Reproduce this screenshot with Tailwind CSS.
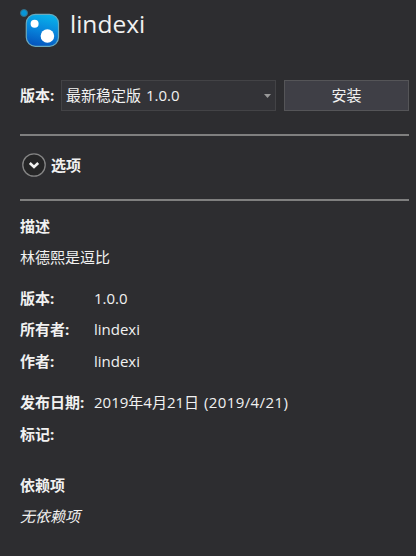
<!DOCTYPE html>
<html lang="zh-CN">
<head>
<meta charset="utf-8">
<title>lindexi</title>
<script src="https://cdn.jsdelivr.net/npm/@tailwindcss/browser@4"></script>
</head>
<body class="flex h-[556px] w-[416px] flex-col overflow-hidden bg-[#2d2d30] pl-5 pr-[7px] font-['Open_Sans','Noto_Sans_CJK_SC',sans-serif] text-[15px] leading-[31px] whitespace-nowrap text-[#f1f1f1]">
  <header class="flex h-[50px] shrink-0 items-center">
    <svg class="h-[50px] w-[50px] shrink-0" viewBox="20 0 50 50">
      <defs>
        <linearGradient id="tile" x1="0.6" y1="0" x2="0.35" y2="1">
          <stop offset="0" stop-color="#08b2ea"/>
          <stop offset="0.5" stop-color="#0785dc"/>
          <stop offset="1" stop-color="#0454bd"/>
        </linearGradient>
      </defs>
      <circle cx="24" cy="13" r="3.5" fill="#0795d6" stroke="#396d82"/>
      <rect x="26.3" y="14.3" width="32.2" height="32" rx="9" fill="url(#tile)" stroke="#69a9bd" stroke-width="1.2"/>
      <circle cx="34.6" cy="23.8" r="4" fill="#fff"/>
      <circle cx="47.4" cy="36" r="6.8" fill="#fff"/>
    </svg>
    <h1 class="pb-[2px] text-[24.5px] leading-[48px]">lindexi</h1>
  </header>

  <div class="mt-[30px] flex h-[31px] shrink-0 items-center">
    <span class="w-[41px] font-bold">版本:</span>
    <div class="flex h-[31px] w-[215px] items-center justify-between border border-[#434346] bg-[#333337] pl-1 pr-1">
      <span>最新稳定版 <span class="ml-px">1.0.0</span></span>
      <svg class="h-1 w-[7px]" viewBox="0 0 7 4"><path d="M0 0h7L3.5 4z" fill="#999"/></svg>
    </div>
    <button class="ml-2 h-[31px] w-[125px] border border-[#555558] bg-[#3f3f46] leading-[29px]">安装</button>
  </div>

  <hr class="mt-[23px] h-[2px] shrink-0 border-0 bg-[#7f7f7f]">

  <div class="mt-[13px] flex h-[32px] shrink-0 items-center">
    <svg class="ml-[2px] h-6 w-6" viewBox="0 0 24 24" fill="none">
      <circle cx="12" cy="12" r="11.2" fill="#252526" stroke="#858585" stroke-width="1.3"/>
      <path d="M7.8 10l4.2 4 4.2-4" stroke="#f1f1f1" stroke-width="2.6"/>
    </svg>
    <span class="ml-[5px] font-bold">选项</span>
  </div>

  <hr class="mt-[18px] h-[2px] shrink-0 border-0 bg-[#7f7f7f]">

  <section class="mt-[10px]">
    <h2 class="font-bold">描述</h2>
    <p>林德熙是逗比</p>
  </section>

  <dl class="mt-[10px] grid grid-cols-[74px_1fr] auto-rows-[31.4px]">
    <dt class="font-bold">版本:</dt><dd>1.0.0</dd>
    <dt class="font-bold">所有者:</dt><dd>lindexi</dd>
    <dt class="font-bold">作者:</dt><dd>lindexi</dd>
  </dl>
  <dl class="mt-[10px] grid grid-cols-[74px_1fr] auto-rows-[31.4px]">
    <dt class="font-bold">发布日期:</dt>
    <dd>2019年4月21日 <span class="ml-px tracking-[0.4px]">(2019/4/21)</span></dd>
    <dt class="font-bold">标记:</dt><dd></dd>
  </dl>

  <section class="mt-[20px]">
    <h2 class="font-bold">依赖项</h2>
    <p class="italic">无依赖项</p>
  </section>
</body>
</html>
